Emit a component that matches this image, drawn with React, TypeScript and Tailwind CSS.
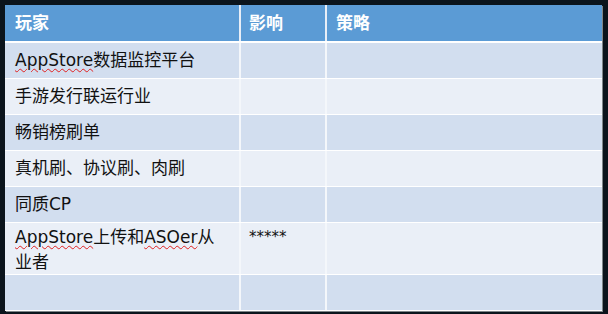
const rows = [
  { player: 'AppStore数据监控平台', impact: '', tall: false },
  { player: '手游发行联运行业', impact: '', tall: false },
  { player: '畅销榜刷单', impact: '', tall: false },
  { player: '真机刷、协议刷、肉刷', impact: '', tall: false },
  { player: '同质CP', impact: '', tall: false },
  { player: 'AppStore上传和ASOer从业者', impact: '*****', tall: true },
  { player: '', impact: '', tall: false },
];

// red squiggle under the latin words, like the spell checker in the original
function Squiggle({ children }: { children: string }) {
  return (
    <span className="underline decoration-wavy decoration-[#e02020] decoration-1 underline-offset-[2px]">
      {children}
    </span>
  );
}

function renderPlayer(text: string) {
  const parts = text.split(/(AppStore|ASOer)/);
  return parts.map((p, i) =>
    p === 'AppStore' || p === 'ASOer' ? <Squiggle key={i}>{p}</Squiggle> : p
  );
}

export default function App() {
  return (
    <div
      className="w-[608px] h-[314px] bg-[#0b141c] pt-[5px] pl-[5px]"
      style={{ fontFamily: '"DejaVu Sans", "Noto Sans CJK SC", sans-serif' }}
    >
      <div className="w-[597px] bg-white shadow-[1px_1px_0_#7d8588]">
        {/* header */}
        <div className="flex h-[36px] bg-[#5b9bd5] text-white font-bold text-[17px] leading-[24px] border-b-2 border-white box-content">
          <div className="w-[234px] pl-[10px] pt-[6px]">玩家</div>
          <div className="w-[86px] pl-[8px] pt-[6px] border-l-2 border-[#e8eef7]">影响</div>
          <div className="flex-1 pl-[9px] pt-[6px] border-l-2 border-[#e8eef7]">策略</div>
        </div>

        {rows.map((row, i) => (
          <div
            key={i}
            className={
              'flex text-[17px] text-[#111] border-b border-white ' +
              (row.tall ? 'h-[52px] leading-[25px] ' : 'h-[36px] leading-[24px] ') +
              (i % 2 === 0 ? 'bg-[#d2deef]' : 'bg-[#eaeff7]')
            }
          >
            <div className={'w-[234px] pl-[10px] pr-[10px] ' + (row.tall ? 'pt-[2px]' : 'pt-[5px]')}>
              {renderPlayer(row.player)}
            </div>
            <div className="w-[86px] pl-[8px] pt-[2px] border-l-2 border-[#f4f7fb] text-[15px]">{row.impact}</div>
            <div className="flex-1 border-l-2 border-[#f4f7fb]"></div>
          </div>
        ))}
      </div>
    </div>
  );
}
